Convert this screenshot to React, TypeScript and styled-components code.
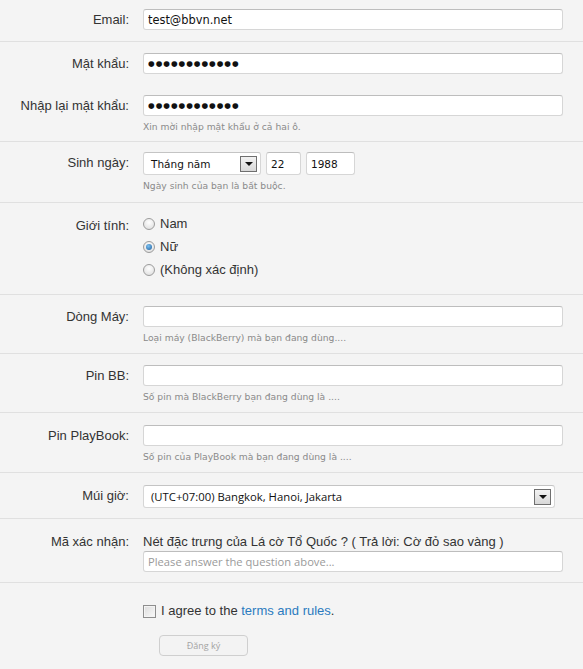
import styled, { createGlobalStyle } from "styled-components";

const GlobalStyle = createGlobalStyle`
  html, body {
    margin: 0;
    padding: 0;
    background: #f4f4f4;
  }
  body {
    font-family: "Liberation Sans", Arial, sans-serif;
    color: #333;
  }
`;

const Form = styled.form`
  width: 583px;
  background: #f4f4f4;
`;

const Section = styled.div<{ $pad?: string }>`
  padding: ${(p) => p.$pad || "9px 0 11px"};
  border-bottom: 1px solid #e0e0e0;
  &:last-child {
    border-bottom: none;
  }
`;

const Row = styled.div<{ $gap?: number }>`
  display: flex;
  align-items: flex-start;
  & + & {
    margin-top: ${(p) => p.$gap ?? 21}px;
  }
`;

const Label = styled.label<{ $lh?: number }>`
  width: 129px;
  flex: none;
  text-align: right;
  font-size: 13px;
  line-height: ${(p) => p.$lh ?? 21}px;
  color: #333;
`;

const Field = styled.div`
  margin-left: 14px;
  width: 420px;
  display: flex;
  flex-direction: column;
`;

const TextInput = styled.input<{ $width?: number; $secret?: boolean }>`
  box-sizing: border-box;
  width: ${(p) => (p.$width ? `${p.$width}px` : "100%")};
  height: 21px;
  margin: 0;
  padding: 0 4px;
  border: 1px solid #d6d6d6;
  border-top-color: #bdbdbd;
  border-radius: 3px;
  background: #fff;
  font-family: "DejaVu Sans", Tahoma, sans-serif;
  font-size: ${(p) => (p.$secret ? "7.6px" : "11.4px")};
  letter-spacing: ${(p) => (p.$secret ? "1px" : "0")};
  color: #111;
  outline: none;
  &::placeholder {
    font-family: "Open Sans", sans-serif;
    font-size: 11.2px;
    color: #9a9a9a;
  }
`;

const SmallInput = styled(TextInput)`
  height: 23px;
  font-size: 10.5px;
`;

const Hint = styled.div`
  margin-top: 5px;
  font-family: "DejaVu Sans", Verdana, sans-serif;
  font-size: 9.2px;
  line-height: 12px;
  color: #8a8a8a;
`;

const Inline = styled.div`
  display: flex;
  gap: 5px;
`;

const SelectBox = styled.div<{ $width: number; $font?: string; $size?: number }>`
  box-sizing: border-box;
  width: ${(p) => p.$width}px;
  height: 23px;
  display: flex;
  align-items: center;
  justify-content: space-between;
  padding: 0 3px 0 7px;
  border: 1px solid #d6d6d6;
  border-top-color: #c4c4c4;
  border-radius: 3px;
  background: #fff;
  font-family: ${(p) => p.$font || `"DejaVu Sans", Tahoma, sans-serif`};
  font-size: ${(p) => p.$size ?? 10.5}px;
  color: #111;
`;

const ArrowButton = styled.span`
  box-sizing: border-box;
  width: 17px;
  height: 16px;
  border: 1px solid #6f6f6f;
  background: linear-gradient(#f2f2f2, #d8d8d8);
  display: flex;
  align-items: center;
  justify-content: center;
  &::after {
    content: "";
    border-left: 4px solid transparent;
    border-right: 4px solid transparent;
    border-top: 4px solid #111;
    margin-top: 1px;
  }
`;

const Options = styled.div`
  display: flex;
  flex-direction: column;
  gap: 5px;
`;

const Option = styled.label`
  display: flex;
  align-items: center;
  gap: 5px;
  font-size: 13px;
  line-height: 18px;
  color: #333;
`;

const Radio = styled.span<{ $checked?: boolean }>`
  box-sizing: border-box;
  width: 12px;
  height: 12px;
  border-radius: 50%;
  border: 1px solid #9c9c9c;
  background: radial-gradient(circle at 50% 35%, #ffffff, #dadada);
  display: flex;
  align-items: center;
  justify-content: center;
  &::after {
    content: "";
    display: ${(p) => (p.$checked ? "block" : "none")};
    width: 6px;
    height: 6px;
    border-radius: 50%;
    background: radial-gradient(circle at 40% 35%, #7cc1f2, #1d5e9c);
  }
`;

const Question = styled.div`
  font-size: 13px;
  line-height: 18px;
  color: #333;
`;

const Agree = styled.label`
  display: flex;
  align-items: center;
  gap: 5px;
  font-size: 13px;
  color: #333;
  line-height: 18px;
`;

const CheckBox = styled.span`
  box-sizing: border-box;
  width: 13px;
  height: 13px;
  border: 1px solid #8e8e8e;
  background: linear-gradient(135deg, #dcdcdc, #fafafa);
  box-shadow: inset 0 0 0 1px #f4f4f4;
`;

const TermsLink = styled.a`
  color: #2b7bbf;
  text-decoration: none;
`;

const SubmitButton = styled.button`
  box-sizing: border-box;
  width: 89px;
  height: 21px;
  margin: 15px 0 0 16px;
  border: 1px solid #cfcfcf;
  border-radius: 4px;
  background: #f3f3f3;
  font-family: "Open Sans", sans-serif;
  font-size: 9px;
  color: #a3a3a3;
  padding: 0;
`;

const DOTS = "●●●●●●●●●●●●";

const App: React.FC = () => {
  return (
    <>
      <GlobalStyle />
      <Form onSubmit={(e) => e.preventDefault()}>
        <Section>
          <Row>
            <Label>Email:</Label>
            <Field>
              <TextInput defaultValue="test@bbvn.net" />
            </Field>
          </Row>
        </Section>

        <Section $pad="11px 0 8px">
          <Row>
            <Label>Mật khẩu:</Label>
            <Field>
              <TextInput $secret defaultValue={DOTS} />
            </Field>
          </Row>
          <Row>
            <Label>Nhập lại mật khẩu:</Label>
            <Field>
              <TextInput $secret defaultValue={DOTS} />
              <Hint>Xin mời nhập mật khẩu ở cả hai ô.</Hint>
            </Field>
          </Row>
        </Section>

        <Section $pad="10px 0 10px">
          <Row>
            <Label>Sinh ngày:</Label>
            <Field>
              <Inline>
                <SelectBox $width={118}>
                  <span>Tháng năm</span>
                  <ArrowButton />
                </SelectBox>
                <SmallInput $width={35} defaultValue="22" />
                <SmallInput $width={49} defaultValue="1988" />
              </Inline>
              <Hint>Ngày sinh của bạn là bất buộc.</Hint>
            </Field>
          </Row>
        </Section>

        <Section $pad="12px 0 15px">
          <Row>
            <Label>Giới tính:</Label>
            <Field>
              <Options>
                <Option>
                  <Radio />
                  Nam
                </Option>
                <Option>
                  <Radio $checked />
                  Nữ
                </Option>
                <Option>
                  <Radio />
                  (Không xác định)
                </Option>
              </Options>
            </Field>
          </Row>
        </Section>

        <Section $pad="11px 0 9px">
          <Row>
            <Label>Dòng Máy:</Label>
            <Field>
              <TextInput />
              <Hint>Loại máy (BlackBerry) mà bạn đang dùng....</Hint>
            </Field>
          </Row>
        </Section>

        <Section $pad="11px 0 9px">
          <Row>
            <Label>Pin BB:</Label>
            <Field>
              <TextInput />
              <Hint>Số pin mà BlackBerry bạn đang dùng là ....</Hint>
            </Field>
          </Row>
        </Section>

        <Section $pad="12px 0 9px">
          <Row>
            <Label>Pin PlayBook:</Label>
            <Field>
              <TextInput />
              <Hint>Số pin của PlayBook mà bạn đang dùng là ....</Hint>
            </Field>
          </Row>
        </Section>

        <Section $pad="12px 0 10px">
          <Row>
            <Label>Múi giờ:</Label>
            <Field>
              <SelectBox $width={412} $font={`"Open Sans", sans-serif`} $size={11.3}>
                <span>(UTC+07:00) Bangkok, Hanoi, Jakarta</span>
                <ArrowButton />
              </SelectBox>
            </Field>
          </Row>
        </Section>

        <Section $pad="14px 0 10px">
          <Row>
            <Label $lh={18}>Mã xác nhận:</Label>
            <Field>
              <Question>Nét đặc trưng của Lá cờ Tổ Quốc ? ( Trả lời: Cờ đỏ sao vàng )</Question>
              <TextInput placeholder="Please answer the question above..." />
            </Field>
          </Row>
        </Section>

        <Section $pad="19px 0 14px">
          <Row>
            <Label />
            <Field>
              <Agree>
                <CheckBox />
                <span>
                  I agree to the <TermsLink href="#">terms and rules</TermsLink>.
                </span>
              </Agree>
              <SubmitButton type="submit">Đăng ký</SubmitButton>
            </Field>
          </Row>
        </Section>
      </Form>
    </>
  );
};

export default App;
